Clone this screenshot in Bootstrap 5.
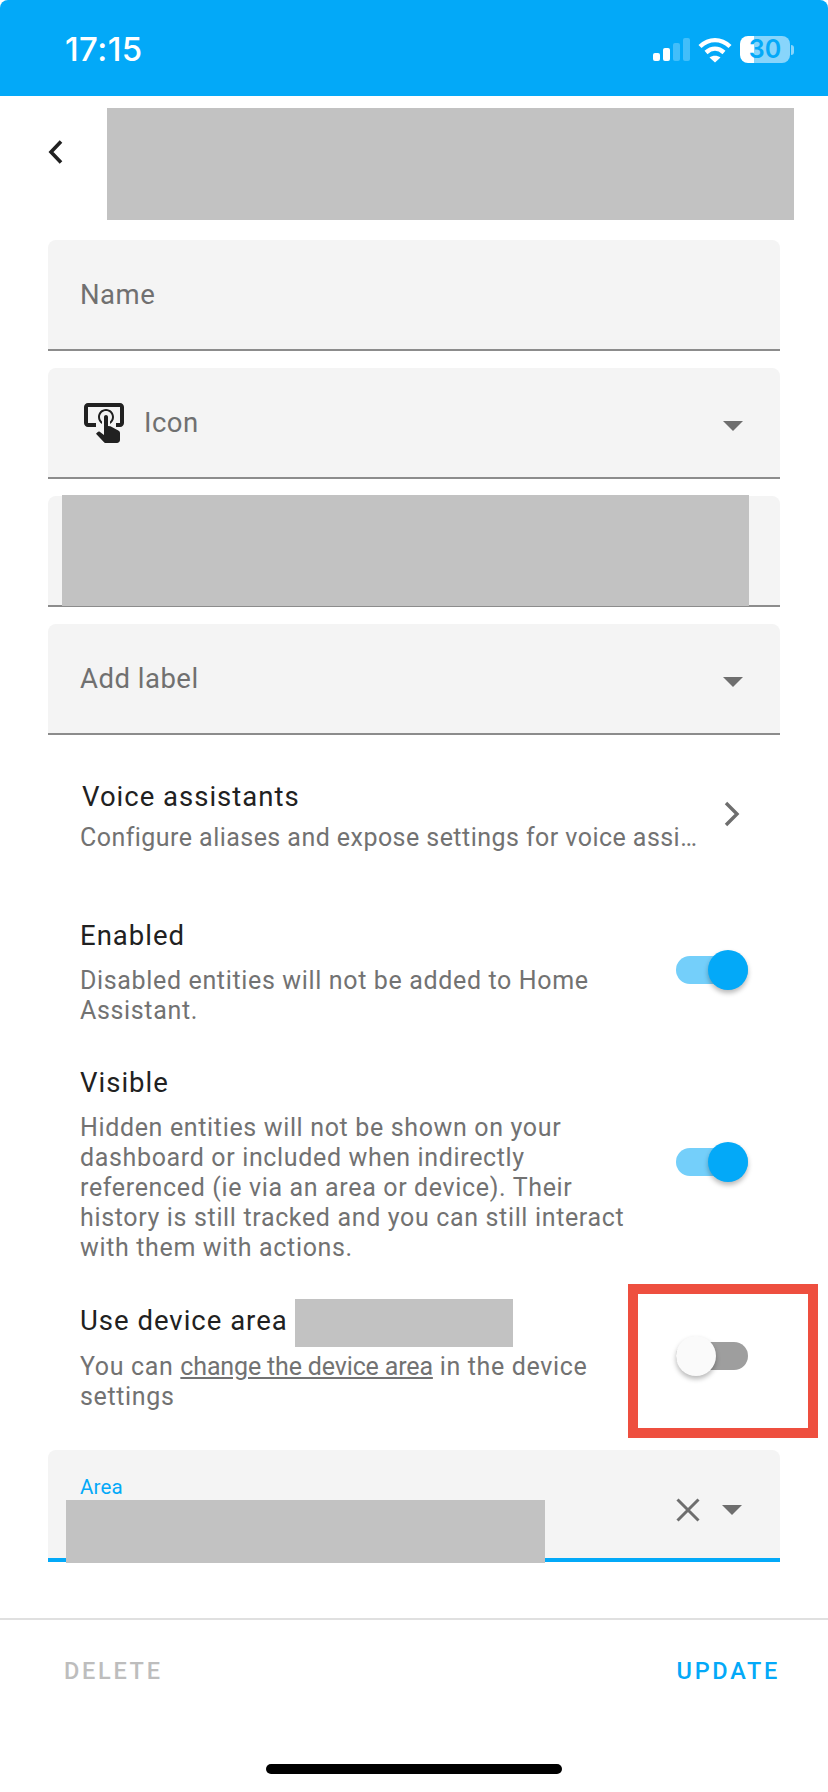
<!DOCTYPE html>
<html lang="en">

<head>
    <meta charset="UTF-8">
    <meta name="viewport" content="width=device-width, initial-scale=1.0">
    <title>Entity settings</title>
    <link href="https://cdn.jsdelivr.net/npm/bootstrap@5.3.0/dist/css/bootstrap.min.css" rel="stylesheet">
    <style>
        body {
            width: 828px;
            height: 1792px;
            overflow: hidden;
            background: #fff;
            font-family: Roboto, "Liberation Sans", sans-serif;
            color: #212121;
        }

        .status-bar {
            height: 96px;
            background: #03a9f8;
            color: #fff;
            border-radius: 8px 8px 0 0;
            padding: 3px 34px 0 65px;
        }

        .clock {
            font-family: Inter, "Liberation Sans", sans-serif;
            font-size: 33px;
            font-weight: 500;
            letter-spacing: 0.4px;
        }

        .battery {
            width: 50px;
            height: 27px;
            border-radius: 8px;
            background: linear-gradient(90deg, #fff 14px, #88d5fb 14px);
            color: #03a9f8;
            font-family: Inter, "Liberation Sans", sans-serif;
            font-size: 25px;
            font-weight: 600;
            line-height: 27px;
            text-align: center;
        }

        .battery-nub {
            width: 3px;
            height: 10px;
            margin-left: 1px;
            background: #88d5fb;
            border-radius: 0 3px 3px 0;
        }

        .page-head {
            padding: 12px 34px 0 48px;
            height: 144px;
        }

        .redacted {
            background: #c2c2c2;
        }

        .head-redacted {
            width: 687px;
            height: 112px;
            margin-left: 44px;
        }

        .back-icon {
            margin-top: 32px;
        }

        .field-box {
            width: 732px;
            height: 111px;
            margin: 0 0 17px 48px;
            padding: 0 37px 0 32px;
            background: #f4f4f4;
            border-radius: 8px 8px 0 0;
            border-bottom: 2px solid #8c8c8c;
            font-size: 27.5px;
            letter-spacing: 0.5px;
            color: #707070;
        }

        .field-icon {
            margin-right: 16px;
        }

        .caret-icon {
            margin-left: auto;
            margin-top: 6px;
        }

        .field-redacted {
            left: 14px;
            top: -1px;
            width: 687px;
            height: 111px;
        }

        .voice-row {
            margin: 43px 0 58px;
            padding: 0 88px 0 80px;
        }

        .voice-chevron {
            margin-bottom: 8px;
        }

        .row-title {
            height: 40px;
            font-size: 27.5px;
            line-height: 40px;
            letter-spacing: 1px;
            color: #212121;
        }

        .row-desc {
            font-size: 25px;
            line-height: 30px;
            letter-spacing: 0.65px;
            color: #727272;
        }

        .voice-title {
            margin: -1px 0 1px 2px;
        }

        .voice-desc {
            line-height: 40px;
            width: 626px;
            letter-spacing: 0.45px;
            white-space: nowrap;
            overflow: hidden;
            text-overflow: ellipsis;
        }

        .setting-row {
            padding: 0 0 0 80px;
            width: 748px;
            margin-bottom: 37px;
        }

        .setting-text {
            width: 560px;
        }

        .setting-text .row-title {
            margin-bottom: 10px;
        }

        .setting-text .area-title {
            margin-top: 1px;
            margin-bottom: 11px;
        }

        .row-desc a {
            color: inherit;
            letter-spacing: -0.15px;
        }

        .inline-redacted {
            width: 218px;
            height: 48px;
            margin: 4px 0 0 7px;
            flex-shrink: 0;
        }

        .switch-track {
            width: 72px;
            height: 28px;
            margin-top: -2px;
            border-radius: 14px;
            background: #74cffa;
        }

        .switch-knob {
            position: absolute;
            top: -6px;
            right: 0;
            width: 40px;
            height: 40px;
            border-radius: 50%;
            background: #03a9f8;
            box-shadow: 0 3px 5px rgba(0, 0, 0, .28);
        }

        .switch-off {
            margin-top: 0;
            background: #9e9e9e;
        }

        .switch-off .switch-knob {
            left: 0;
            right: auto;
            background: #fafafa;
        }

        .callout-box {
            top: -16px;
            left: 628px;
            width: 190px;
            height: 154px;
            border: 10px solid #ee4f3f;
        }

        .area-box {
            width: 732px;
            height: 112px;
            margin: 38px 0 0 48px;
            padding: 12px 38px 0 0;
            background: #f4f4f4;
            border-radius: 8px 8px 0 0;
            border-bottom: 4px solid #03a9f8;
        }

        .area-label {
            left: 32px;
            top: 21px;
            font-size: 20.5px;
            line-height: 32px;
            letter-spacing: 0.2px;
            color: #03a9f8;
        }

        .area-redacted {
            left: 18px;
            top: 50px;
            width: 479px;
            height: 63px;
        }

        .area-clear {
            margin-right: 22px;
            margin-left: auto;
        }

        .action-bar {
            margin-top: 56px;
            padding: 0 48px 0 64px;
            height: 105px;
            border-top: 2px solid #e0e0e0;
            font-size: 23.5px;
            font-weight: 500;
            letter-spacing: 2.7px;
        }

        .action-off {
            color: #bdbdbd;
        }

        .action-on {
            color: #03a9f8;
        }

        .home-bar {
            width: 296px;
            height: 10px;
            margin: 41px 0 0 266px;
            background: #000;
            border-radius: 5px;
        }
    </style>
</head>

<body>
    <div class="status-bar d-flex align-items-center">
        <span class="clock">17:15</span>
        <svg class="ms-auto" width="37" height="23" viewBox="0 0 37 23" fill="#fff">
            <rect x="0" y="15" width="7" height="8" rx="2" />
            <rect x="10" y="10" width="7" height="13" rx="2" />
            <rect x="20" y="5" width="7" height="18" rx="2" opacity=".25" />
            <rect x="30" y="0" width="7" height="23" rx="2" opacity=".25" />
        </svg>
        <svg class="ms-2" width="34" height="26" viewBox="0 0 34 26" fill="none" stroke="#fff" stroke-width="4.4">
            <path d="M2 9.5C11 1 23 1 32 9.5" />
            <path d="M8 15.5C13.5 10.5 20.5 10.5 26 15.5" />
            <path d="M17 25.5L11.5 20.5C14.5 18 19.5 18 22.5 20.5Z" fill="#fff" stroke="none" />
        </svg>
        <div class="battery ms-2">30</div>
        <div class="battery-nub"></div>
    </div>

    <div class="page-head d-flex">
        <svg class="back-icon" width="15" height="24" viewBox="0 0 15 24" fill="none" stroke="#212121" stroke-width="3.6">
            <path d="M13 1.5L3 12L13 22.5" />
        </svg>
        <div class="redacted head-redacted"></div>
    </div>

    <div class="field-box d-flex align-items-center">Name</div>

    <div class="field-box d-flex align-items-center">
        <svg class="field-icon" width="48" height="48" viewBox="0 0 24 24" fill="#212121">
            <path d="M13 5C15.21 5 17 6.79 17 9C17 10.5 16.2 11.77 15 12.46V11.24C15.61 10.69 16 9.89 16 9C16 7.34 14.66 6 13 6S10 7.34 10 9C10 9.89 10.39 10.69 11 11.24V12.46C9.8 11.77 9 10.5 9 9C9 6.79 10.79 5 13 5M20 20.5C19.97 21.32 19.32 21.97 18.5 22H13C12.62 22 12.26 21.85 12 21.57L8 17.37L8.74 16.6C8.93 16.39 9.2 16.28 9.5 16.28H9.7L12 18V9C12 8.45 12.45 8 13 8S14 8.45 14 9V13.47L15.21 13.6L19.15 15.79C19.68 16.03 20 16.56 20 17.14V20.5M20 2H4C2.9 2 2 2.9 2 4V12C2 13.11 2.9 14 4 14H8V12L4 12L4 4H20L20 12H18V14H20V13.96L20.04 14C21.13 14 22 13.09 22 12V4C22 2.9 21.11 2 20 2Z" />
        </svg>
        <span>Icon</span>
        <svg class="caret-icon" width="20" height="10" viewBox="0 0 20 10" fill="#6e6e6e"><path d="M0 0H20L10 10Z" /></svg>
    </div>

    <div class="field-box position-relative">
        <div class="redacted field-redacted position-absolute"></div>
    </div>

    <div class="field-box d-flex align-items-center">
        <span>Add label</span>
        <svg class="caret-icon" width="20" height="10" viewBox="0 0 20 10" fill="#6e6e6e"><path d="M0 0H20L10 10Z" /></svg>
    </div>

    <div class="voice-row d-flex align-items-center justify-content-between">
        <div>
            <div class="row-title voice-title">Voice assistants</div>
            <div class="row-desc voice-desc">Configure aliases and expose settings for voice assistants</div>
        </div>
        <svg class="voice-chevron" width="16" height="26" viewBox="0 0 16 26" fill="none" stroke="#6e6e6e" stroke-width="3.4">
            <path d="M2 2L13 13L2 24" />
        </svg>
    </div>

    <div class="setting-row d-flex align-items-center justify-content-between">
        <div class="setting-text">
            <div class="row-title">Enabled</div>
            <div class="row-desc">Disabled entities will not be added to Home Assistant.</div>
        </div>
        <div class="switch-track position-relative"><div class="switch-knob"></div></div>
    </div>

    <div class="setting-row d-flex align-items-center justify-content-between">
        <div class="setting-text">
            <div class="row-title">Visible</div>
            <div class="row-desc">Hidden entities will not be shown on your dashboard or included when indirectly referenced (ie via an area or device). Their history is still tracked and you can still interact with them with actions.</div>
        </div>
        <div class="switch-track position-relative"><div class="switch-knob"></div></div>
    </div>

    <div class="setting-row d-flex align-items-center justify-content-between position-relative mb-0">
        <div class="setting-text">
            <div class="row-title area-title d-flex align-items-center">Use device area<div class="redacted inline-redacted"></div></div>
            <div class="row-desc">You can <a href="#">change the device area</a> in the device settings</div>
        </div>
        <div class="switch-track switch-off position-relative"><div class="switch-knob"></div></div>
        <div class="callout-box position-absolute"></div>
    </div>

    <div class="area-box d-flex align-items-center position-relative">
        <div class="area-label position-absolute">Area</div>
        <div class="redacted area-redacted position-absolute"></div>
        <svg class="area-clear" width="24" height="24" viewBox="0 0 24 24" fill="none" stroke="#6e6e6e" stroke-width="3">
            <path d="M1.5 1.5L22.5 22.5M22.5 1.5L1.5 22.5" />
        </svg>
        <svg width="20" height="10" viewBox="0 0 20 10" fill="#6e6e6e"><path d="M0 0H20L10 10Z" /></svg>
    </div>

    <div class="action-bar d-flex align-items-center justify-content-between">
        <span class="action-off">DELETE</span>
        <span class="action-on">UPDATE</span>
    </div>

    <div class="home-bar"></div>

    <script src="https://cdn.jsdelivr.net/npm/bootstrap@5.3.0/dist/js/bootstrap.bundle.min.js"></script>
</body>

</html>
